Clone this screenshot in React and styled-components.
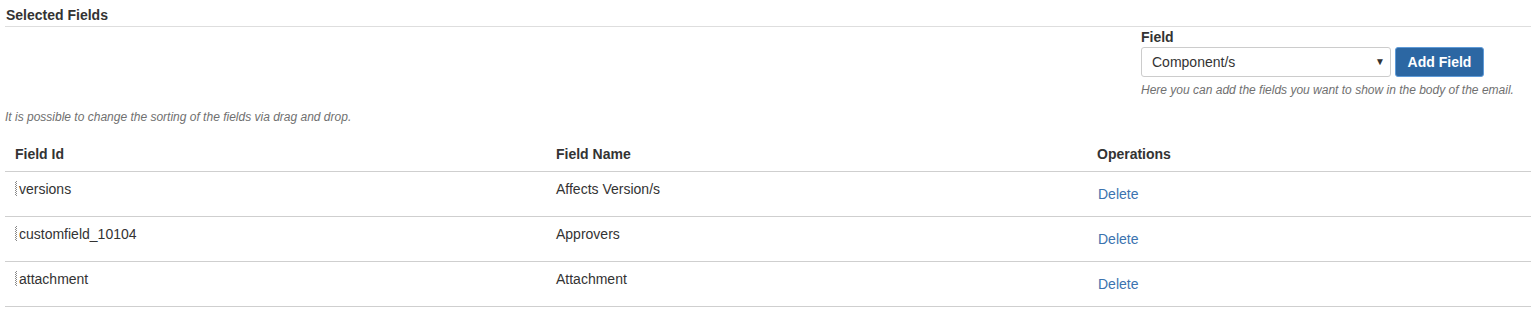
import React from 'react';
import styled, { createGlobalStyle } from 'styled-components';

const GlobalStyle = createGlobalStyle`
    body {
        margin: 0;
        background: #fff;
        font-family: "Liberation Sans", Arial, sans-serif;
        font-size: 14px;
        line-height: 20px;
        color: #333;
    }
`

const Page = styled.div`
    padding: 5px 0 0 5px;
`

const Heading = styled.h4`
    margin: 0;
    padding: 0 0 1px 1px;
    font-size: 14px;
    line-height: 20px;
    font-weight: bold;
    color: #333;
    border-bottom: 1px solid #dedede;
`

const FormRow = styled.div`
    display: flex;
    justify-content: flex-end;
`

const FormGroup = styled.div`
    width: 380px;
    margin-right: 10px;
`

const Label = styled.label`
    display: block;
    font-weight: bold;
    line-height: 20px;
`

const Controls = styled.div`
    display: flex;
    gap: 4px;
`

const SelectBox = styled.div`
    position: relative;
    box-sizing: border-box;
    width: 250px;
    height: 30px;
    padding: 0 10px;
    border: 1px solid #ccc;
    border-radius: 3px;
    line-height: 28px;
    color: #333;
`

const Caret = styled.span`
    position: absolute;
    right: 5px;
    top: 0;
    font-size: 10px;
    color: #333;
`

const Button = styled.button`
    box-sizing: border-box;
    width: 89px;
    height: 30px;
    padding: 0;
    border: 1px solid #5f9bd8;
    border-radius: 3px;
    background: #2c67a3;
    color: #fff;
    font-family: inherit;
    font-size: 14px;
    font-weight: bold;
`

const Help = styled.p`
    margin: 5px 0 0;
    font-size: 12px;
    line-height: 17px;
    font-style: italic;
    color: #707070;
    white-space: nowrap;
`

const Note = styled(Help)`
    margin: 10px 0 0;
`

const Table = styled.div`
    margin-top: 10px;
`

const Row = styled.div`
    display: grid;
    grid-template-columns: 541px 541px 1fr;
    height: ${p => (p.$head ? '35px' : '44px')};
    border-bottom: 1px solid #cfcfcf;
`

const HeadCell = styled.div`
    padding: 8px 10px 0;
    font-weight: bold;
    line-height: 20px;
`

const Cell = styled.div`
    display: flex;
    align-items: ${p => (p.$center ? 'center' : 'flex-start')};
    padding: ${p => (p.$center ? '0 10px 0 11px' : '7px 10px 0')};
    line-height: 20px;
`

const Handle = styled.span`
    display: inline-block;
    flex: none;
    width: 2px;
    height: 15px;
    margin: 2px 2px 0 0;
    background-image: linear-gradient(45deg, #8a8a8a 25%, transparent 25%, transparent 75%, #8a8a8a 75%),
        linear-gradient(45deg, #8a8a8a 25%, transparent 25%, transparent 75%, #8a8a8a 75%);
    background-size: 2px 2px;
    background-position: 0 0, 1px 1px;
`

const DeleteLink = styled.a`
    color: #3b73af;
    text-decoration: none;
    cursor: pointer;
`

const fields = [
    { id: 'versions', name: 'Affects Version/s' },
    { id: 'customfield_10104', name: 'Approvers' },
    { id: 'attachment', name: 'Attachment' },
];

function App() {
    return (
        <Page>
            <GlobalStyle />
            <Heading>Selected Fields</Heading>
            <FormRow>
                <FormGroup>
                    <Label>Field</Label>
                    <Controls>
                        <SelectBox>
                            Component/s
                            <Caret>▼</Caret>
                        </SelectBox>
                        <Button>Add Field</Button>
                    </Controls>
                    <Help>Here you can add the fields you want to show in the body of the email.</Help>
                </FormGroup>
            </FormRow>
            <Note>It is possible to change the sorting of the fields via drag and drop.</Note>
            <Table>
                <Row $head>
                    <HeadCell>Field Id</HeadCell>
                    <HeadCell>Field Name</HeadCell>
                    <HeadCell>Operations</HeadCell>
                </Row>
                {fields.map(item => (
                    <Row key={item.id}>
                        <Cell><Handle />{item.id}</Cell>
                        <Cell>{item.name}</Cell>
                        <Cell $center><DeleteLink>Delete</DeleteLink></Cell>
                    </Row>
                ))}
            </Table>
        </Page>
    )
}

export default App;
